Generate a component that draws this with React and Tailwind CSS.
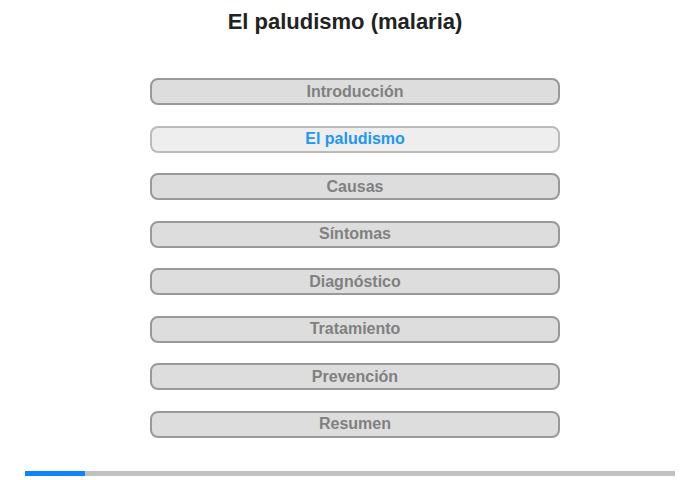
export default function App() {
  const items = ["Introducción", "El paludismo", "Causas", "Síntomas", "Diagnóstico", "Tratamiento", "Prevención", "Resumen"];
  return (
    <div className="w-[700px] h-[480px] bg-white relative" style={{ fontFamily: '"Liberation Sans", Arial, sans-serif' }}>
      <h1 className="text-[22px] font-bold text-[#222] text-center pt-[8px] pr-[10px] leading-[28px]">El paludismo (malaria)</h1>
      <div className="flex flex-col items-center gap-[20.5px] mt-[42px] pl-[10px]">
        {items.map((t, i) => (
          <div
            key={t}
            className={
              i === 1
                ? "w-[410px] h-[27px] rounded-[8px] border-2 border-[#bbb] bg-[#eee] text-[#2196f3] flex items-center justify-center text-[16px] font-bold"
                : "w-[410px] h-[27px] rounded-[8px] border-2 border-[#999] bg-[#ddd] text-[#808080] flex items-center justify-center text-[16px] font-bold"
            }
          >
            {t}
          </div>
        ))}
      </div>
      <div className="absolute left-[25px] top-[471px] w-[650px] h-[5px] bg-[#c0c0c0]">
        <div className="w-[60px] h-full bg-[#0a84ff]" />
      </div>
    </div>
  );
}
